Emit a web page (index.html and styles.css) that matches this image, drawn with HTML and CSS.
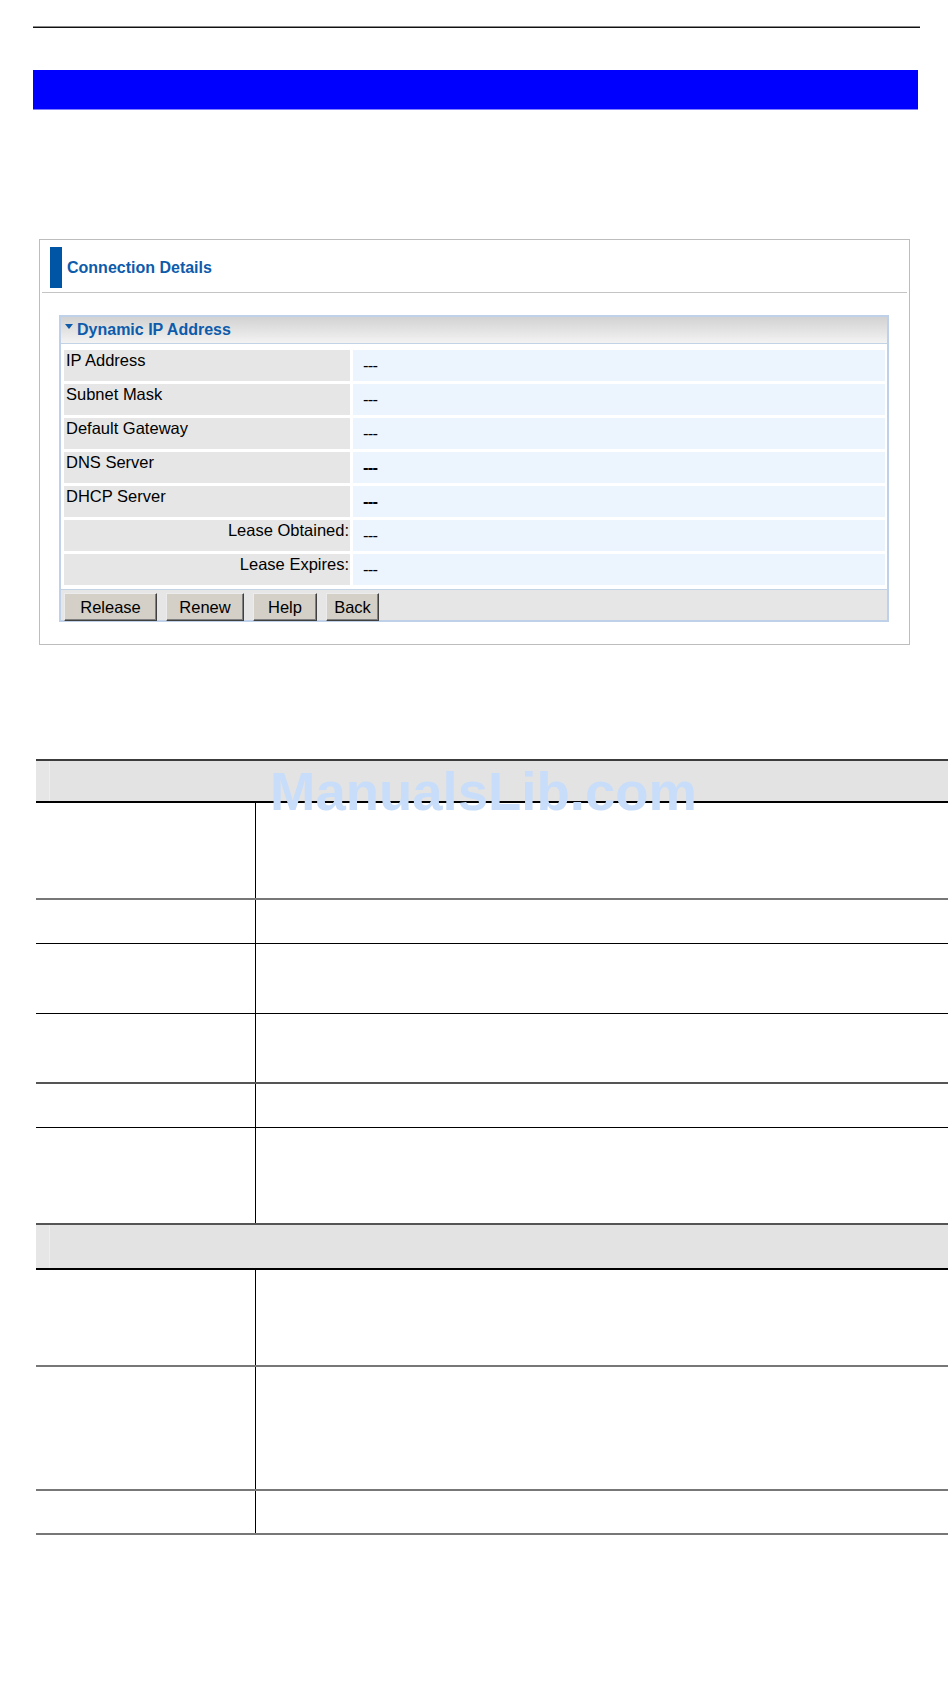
FILE: index.html
```html
<!DOCTYPE html>
<html lang="en">
<head>
    <meta charset="UTF-8">
    <meta name="viewport" content="width=device-width, initial-scale=1.0">
    <title>Connection Details</title>
    <link rel="stylesheet" href="styles.css">
</head>
<body>
    <div class="page">
        <div class="top-rule"></div>
        <div class="title-bar"></div>

        <div class="panel">
            <div class="panel-head">
                <span class="accent"></span>
                <span class="panel-title">Connection Details</span>
            </div>

            <div class="section">
                <div class="section-title">
                    <svg class="arrow" width="8" height="5" viewBox="0 0 8 5"><path d="M0 0 H8 L4 5 Z" fill="#0d5bab"/></svg>
                    <span>Dynamic IP Address</span>
                </div>

                <table class="info-table">
                    <tr>
                        <td class="label">IP Address</td>
                        <td class="value">---</td>
                    </tr>
                    <tr>
                        <td class="label">Subnet Mask</td>
                        <td class="value">---</td>
                    </tr>
                    <tr>
                        <td class="label">Default Gateway</td>
                        <td class="value">---</td>
                    </tr>
                    <tr>
                        <td class="label">DNS Server</td>
                        <td class="value bold">---</td>
                    </tr>
                    <tr>
                        <td class="label">DHCP Server</td>
                        <td class="value bold">---</td>
                    </tr>
                    <tr>
                        <td class="label right">Lease Obtained:</td>
                        <td class="value">---</td>
                    </tr>
                    <tr>
                        <td class="label right">Lease Expires:</td>
                        <td class="value">---</td>
                    </tr>
                </table>

                <div class="button-bar">
                    <button class="btn btn-release">Release</button>
                    <button class="btn btn-renew">Renew</button>
                    <button class="btn btn-help">Help</button>
                    <button class="btn btn-back">Back</button>
                </div>
            </div>
        </div>

        <div class="desc-table">
            <div class="desc-head rule-first"></div>
            <div class="desc-row h3 rule-gray"><div></div><div class="desc-text"></div></div>
            <div class="desc-row h1 rule-black"><div></div><div class="desc-text"></div></div>
            <div class="desc-row h2 rule-black"><div></div><div class="desc-text"></div></div>
            <div class="desc-row h2 rule-dark"><div></div><div class="desc-text"></div></div>
            <div class="desc-row h1 rule-black"><div></div><div class="desc-text"></div></div>
            <div class="desc-row h3 rule-dark"><div></div><div class="desc-text"></div></div>
            <div class="desc-head"></div>
            <div class="desc-row h3 rule-gray"><div></div><div class="desc-text"></div></div>
            <div class="desc-row h4 rule-gray"><div></div><div class="desc-text"></div></div>
            <div class="desc-row h1 rule-gray"><div></div><div class="desc-text"></div></div>

            <div class="watermark">ManualsLib.com</div>
        </div>
    </div>
</body>
</html>
```

FILE: styles.css
```css
* {
    box-sizing: border-box;
}

body {
    margin: 0;
    background: #ffffff;
    font-family: "Liberation Sans", Arial, sans-serif;
    color: #000000;
}

.page {
    padding: 26px 0 0 33px;
}

.top-rule {
    width: 887px;
    height: 2px;
    border-top: 1px solid #8a8a8a;
    border-bottom: 1px solid #111111;
}

.title-bar {
    width: 885px;
    height: 40px;
    margin-top: 42px;
    background: #0000ff;
    border-bottom: 1px solid #8080ff;
}

/* connection details screenshot */
.panel {
    width: 871px;
    margin: 129px 0 0 6px;
    border: 1px solid #bdbdbd;
    padding: 0 20px 22px 19px;
}

.panel-head {
    display: flex;
    align-items: center;
    height: 53px;
    margin: 0 -18px 22px -17px;
    padding: 7px 0 4px 8px;
    border-bottom: 1px solid #c4c4c4;
}

.accent {
    width: 12px;
    height: 41px;
    background: #0055a4;
}

.panel-title {
    margin-left: 5px;
    font-size: 16px;
    font-weight: bold;
    color: #0d5bab;
}

.section {
    border: 2px solid #bfd1e8;
}

.section-title {
    display: flex;
    align-items: center;
    height: 27px;
    padding-left: 4px;
    background: linear-gradient(#d2d2d2, #f3f3f3);
    border-bottom: 1px solid #c3d3e6;
    font-size: 16px;
    font-weight: bold;
    color: #0d5bab;
}

.arrow {
    margin: 0 4px 7px 0;
}

.info-table {
    width: 827px;
    margin: 3px 0 1px;
    border-spacing: 3px;
    font-size: 16.5px;
}

.info-table td {
    height: 31px;
    padding: 0;
}

.label {
    width: 286px;
    background: #e6e6e6;
    vertical-align: top;
    padding: 1px 2px 0 2px !important;
    line-height: 18px;
}

.label.right {
    text-align: right;
    padding-right: 1px !important;
}

.value {
    background: #ecf4fd;
    vertical-align: middle;
    padding-left: 10px !important;
    letter-spacing: -0.8px;
}

.value.bold {
    font-weight: bold;
}

.button-bar {
    display: flex;
    gap: 9px;
    height: 31px;
    padding: 3px 0 0 3px;
    background: #e6e6e6;
    border-top: 1px solid #c3d3e6;
}

.btn {
    height: 28px;
    padding: 0;
    background: #d4d0c8;
    border: 1px solid;
    border-color: #ececec #404040 #404040 #ececec;
    box-shadow: inset -1px -1px #808080;
    font-family: "Liberation Sans", Arial, sans-serif;
    font-size: 16.5px;
    color: #000000;
}

.btn-release { width: 93px; }
.btn-renew { width: 78px; }
.btn-help { width: 64px; }
.btn-back { width: 53px; }

/* description table */
.desc-table {
    position: relative;
    width: 912px;
    margin: 114px 0 0 3px;
}

.desc-head {
    height: 45px;
    background: linear-gradient(to right, #e6e6e6 0 13px, #eeeeee 13px 14px, #e3e3e3 14px);
    border-bottom: 2px solid #000000;
}

.desc-head.rule-first {
    height: 44px;
    border-top: 2px solid #3c3c3c;
}

.desc-row {
    display: grid;
    grid-template-columns: 219px 1fr;
}

.desc-text {
    border-left: 1px solid #000000;
}

.h1 { height: 44px; }
.h2 { height: 70px; }
.h3 { height: 97px; }
.h4 { height: 124px; }

.rule-gray { border-bottom: 2px solid #777777; }
.rule-dark { border-bottom: 2px solid #555555; }
.rule-black { border-bottom: 1px solid #000000; }

.watermark {
    position: absolute;
    top: 6px;
    left: 234px;
    font-size: 54.5px;
    font-weight: bold;
    line-height: 1;
    color: #c8ddf9;
    pointer-events: none;
}
```
